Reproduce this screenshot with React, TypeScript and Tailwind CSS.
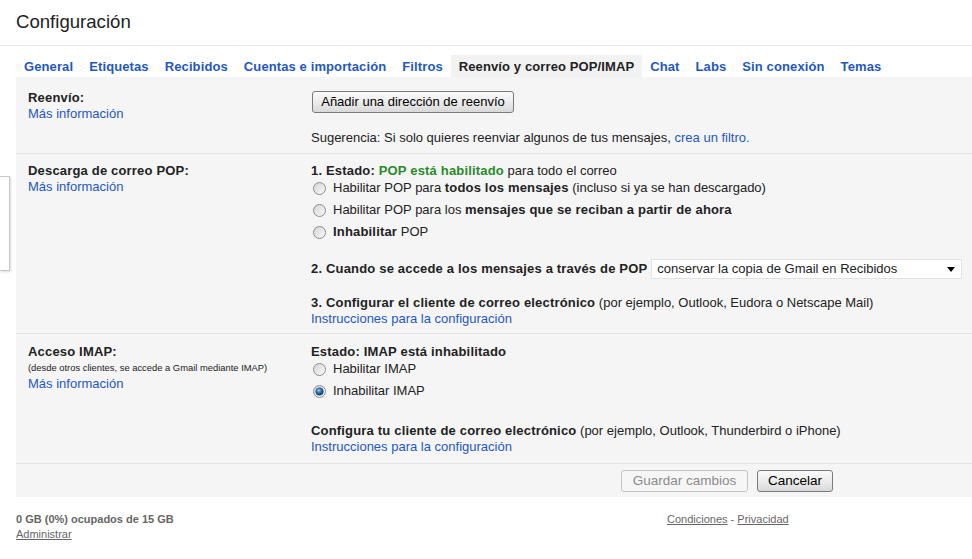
import { type FC, type ReactNode } from 'react';

const tabs = [
  'General',
  'Etiquetas',
  'Recibidos',
  'Cuentas e importación',
  'Filtros',
  'Reenvío y correo POP/IMAP',
  'Chat',
  'Labs',
  'Sin conexión',
  'Temas',
];

const ACTIVE_TAB = 'Reenvío y correo POP/IMAP';

/** Old-style (Windows 7) radio button */
const Radio: FC<{ checked?: boolean; id: string }> = ({ checked = false, id }) => (
  <svg width="13" height="13" viewBox="0 0 13 13" className="shrink-0" aria-hidden="true">
    <defs>
      <linearGradient id={`${id}-bg`} x1="0" y1="0" x2="1" y2="1">
        <stop offset="0" stopColor="#d4d4d4" />
        <stop offset="0.55" stopColor="#e9e9e9" />
        <stop offset="1" stopColor="#fbfbfb" />
      </linearGradient>
      <radialGradient id={`${id}-dot`} cx="0.4" cy="0.35" r="0.7">
        <stop offset="0" stopColor="#9fd2f2" />
        <stop offset="0.45" stopColor="#2f77b5" />
        <stop offset="1" stopColor="#0d2f57" />
      </radialGradient>
    </defs>
    <circle cx="6.5" cy="6.5" r="6" fill={`url(#${id}-bg)`} stroke="#8d8d8d" strokeWidth="1" />
    {checked && <circle cx="6.5" cy="6.5" r="3.8" fill={`url(#${id}-dot)`} stroke="#1d3e63" strokeWidth="0.5" />}
  </svg>
);

const RadioRow: FC<{ id: string; checked?: boolean; children: ReactNode }> = ({ id, checked, children }) => (
  <div className="h-[22px] flex items-center">
    <span className="ml-[2px] mr-[7px] flex">
      <Radio id={id} checked={checked} />
    </span>
    <span>{children}</span>
  </div>
);

// bold text renders a touch wider in the original
const B: FC<{ children: ReactNode; className?: string }> = ({ children, className = '' }) => (
  <b className={`font-bold tracking-[0.18px] ${className}`}>{children}</b>
);

const GrayButton: FC<{ children: ReactNode; disabled?: boolean; className?: string }> = ({
  children,
  disabled,
  className = '',
}) =>
  disabled ? (
    <button
      className={`h-[22px] rounded-[3px] border border-[#c4c4c4] bg-[#f6f6f6] text-[#8a8a8a] leading-[20px] text-center ${className}`}
    >
      {children}
    </button>
  ) : (
    <button
      className={`h-[22px] rounded-[3px] border border-[#7a7a7a] bg-linear-to-b from-[#fbfbfb] via-[#ececec] to-[#d9d9d9] text-black leading-[20px] text-center ${className}`}
    >
      {children}
    </button>
  );

const Link: FC<{ children: ReactNode }> = ({ children }) => (
  <span className="text-[#1f58bd] cursor-pointer">{children}</span>
);

export default function App() {
  return (
    <div className="relative w-[972px] h-[559px] overflow-hidden bg-white text-[13px] leading-[16px] text-[#222] font-['Liberation_Sans',Arial,sans-serif]">
      {/* Title */}
      <div className="h-[46px] border-b border-[#e5e5e5] pl-4 pt-[11px] text-[18.6px] leading-[22px] text-[#222]">
        Configuración
      </div>

      {/* Tabs */}
      <div className="pt-[9px] pl-4 flex font-bold tracking-[0.11px]">
        {tabs.map((t) => (
          <div
            key={t}
            className={
              t === ACTIVE_TAB
                ? 'h-[22px] pt-[2px] leading-[20px] px-2 bg-[#f2f2f2] text-[#222]'
                : 'h-[22px] pt-[2px] leading-[20px] px-2 text-[#1f58bd] cursor-pointer'
            }
          >
            {t}
          </div>
        ))}
      </div>

      {/* Settings panel */}
      <div className="ml-4 bg-[#f5f5f5]">
        {/* Reenvío */}
        <div className="grid grid-cols-[295px_1fr] pt-[13px] pb-[7px] border-b border-[#e3e3e3]">
          <div className="pl-3">
            <div>
              <B>Reenvío:</B>
            </div>
            <Link>Más información</Link>
          </div>
          <div>
            <div className="mt-[1px] ml-[1px]">
              <GrayButton className="w-[202px] text-[13px]">Añadir una dirección de reenvío</GrayButton>
            </div>
            <div className="mt-[17px]">
              Sugerencia: Si solo quieres reenviar algunos de tus mensajes, <Link>crea un filtro.</Link>
            </div>
          </div>
        </div>

        {/* POP */}
        <div className="grid grid-cols-[295px_1fr] pt-[9px] pb-[6px] border-b border-[#e3e3e3]">
          <div className="pl-3">
            <div>
              <B>Descarga de correo POP:</B>
            </div>
            <Link>Más información</Link>
          </div>
          <div>
            <div>
              <B>1. Estado: </B>
              <B className="text-[#2b8a2b]">POP está habilitado</B> para todo el correo
            </div>
            <div className="-mt-[2px]">
              <RadioRow id="pop1">
                Habilitar POP para <B>todos los mensajes</B> (incluso si ya se han descargado)
              </RadioRow>
              <RadioRow id="pop2">
                Habilitar POP para los <B>mensajes que se reciban a partir de ahora</B>
              </RadioRow>
              <RadioRow id="pop3">
                <B>Inhabilitar</B> POP
              </RadioRow>
            </div>
            <div className="mt-[16px] h-[20px] flex items-center">
              <B>2. Cuando se accede a los mensajes a través de POP</B>
              <div className="ml-[4px] w-[311px] h-[20px] bg-white border border-[#e2e2e2] flex items-center justify-between pl-[5px] pr-[6px]">
                <span>conservar la copia de Gmail en Recibidos</span>
                <span className="w-0 h-0 border-l-[4px] border-r-[4px] border-t-[5px] border-l-transparent border-r-transparent border-t-black" />
              </div>
            </div>
            <div className="mt-[16px]">
              <B>3. Configurar el cliente de correo electrónico</B> (por ejemplo, Outlook, Eudora o Netscape Mail)
            </div>
            <Link>Instrucciones para la configuración</Link>
          </div>
        </div>

        {/* IMAP */}
        <div className="grid grid-cols-[295px_1fr] pt-[10px] pb-[8px] border-b border-[#e3e3e3]">
          <div className="pl-3">
            <div>
              <B>Acceso IMAP:</B>
            </div>
            <div className="text-[9.4px] leading-[16px]">(desde otros clientes, se accede a Gmail mediante IMAP)</div>
            <Link>Más información</Link>
          </div>
          <div>
            <div>
              <B>Estado: IMAP está inhabilitado</B>
            </div>
            <div className="-mt-[2px]">
              <RadioRow id="imap1">Habilitar IMAP</RadioRow>
              <RadioRow id="imap2" checked>
                Inhabilitar IMAP
              </RadioRow>
            </div>
            <div className="mt-[21px]">
              <B>Configura tu cliente de correo electrónico</B> (por ejemplo, Outlook, Thunderbird o iPhone)
            </div>
            <Link>Instrucciones para la configuración</Link>
          </div>
        </div>

        {/* Save / cancel */}
        <div className="pt-[6px] pb-[5px] pl-[605px] flex gap-[9px]">
          <GrayButton disabled className="w-[127px] text-[13.5px]">
            Guardar cambios
          </GrayButton>
          <GrayButton className="w-[76px] text-[13.5px]">Cancelar</GrayButton>
        </div>
      </div>

      {/* Footer */}
      <div className="mt-[15px] pl-4 grid grid-cols-[651px_1fr] text-[11px] leading-[15px] text-[#666]">
        <div>
          <div className="font-bold">0 GB (0%) ocupados de 15 GB</div>
          <div className="underline cursor-pointer">Administrar</div>
        </div>
        <div>
          <span className="underline cursor-pointer">Condiciones</span> -{' '}
          <span className="underline cursor-pointer">Privacidad</span>
        </div>
      </div>

      {/* Partly hidden side panel at the left edge */}
      <div className="absolute left-0 top-[176px] w-[10px] h-[95px] bg-white border border-l-0 border-[#c8c8c8] shadow-[1px_1px_2px_rgba(0,0,0,0.15)]" />
    </div>
  );
}
